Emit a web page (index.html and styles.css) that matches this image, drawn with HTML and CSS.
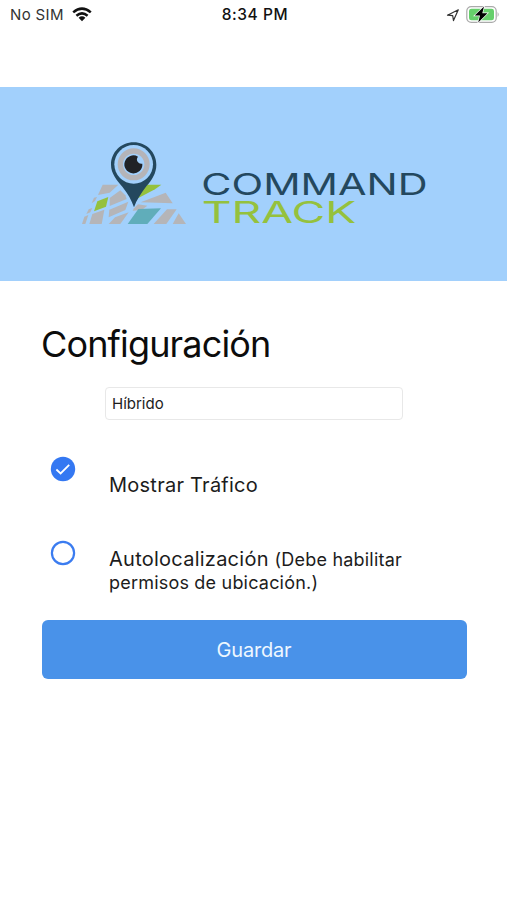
FILE: index.html
```html
<!DOCTYPE html>
<html lang="es">
<head>
<meta charset="utf-8">
<title>Configuración</title>
<link rel="stylesheet" href="styles.css">
</head>
<body>
<div class="status">
  <div class="carrier"><span class="sim">No SIM</span>
    <svg class="wifi" width="20" height="15" viewBox="0 0 20 15" fill="none" stroke="#111" stroke-width="2.5"><path d="M1.2 5.4Q10-2.2 18.8 5.4M4.4 8.8Q10 4 15.6 8.8"/><path d="M6.6 10.7Q10 8 13.4 10.7L10 14.2Z" fill="#111" stroke="none"/></svg>
  </div>
  <time class="clock">8:34 PM</time>
  <div class="power">
    <svg width="14" height="14" viewBox="0 0 14 14" fill="none" stroke="#333" stroke-width="1.2" stroke-linejoin="round"><path d="M1.5 7.2L12.3 1.8L7.5 12.6L6.7 7.6Z"/></svg>
    <svg width="34" height="20" viewBox="0 0 34 20"><rect x=".8" y="1.6" width="29.4" height="15.8" rx="4.4" fill="#fff" stroke="#aaa" stroke-width="1.2"/><rect x="3" y="3.7" width="25" height="11.6" rx="2.4" fill="#66cf6b"/><path d="M31.6 7Q33.8 9.5 31.6 12Z" fill="#aaa"/><path d="M18 1.5L8.7 10.5H14L12.2 17.5L21.5 8.2H16.3Z" fill="#000" stroke="#fff" stroke-width="1.3" paint-order="stroke"/></svg>
  </div>
</div>
<header class="banner">
  <svg class="logo" width="370" height="105" viewBox="0 0 1110 315">
    <g fill="#b5b5b8">
      <path d="M98 164H145L119 188L84 195Z"/>
      <path d="M119 204L151 181L166 196L170 207L119 228Z"/>
      <path d="M118 239L175 215L166 240L116 262Z"/>
      <path d="M72 203L81 201L75 213L65 220Z"/>
      <path d="M56 238L67 234L61 247L49 252Z"/>
      <path d="M43 260L55 255L46 282H36Z"/>
      <path d="M67 252L103 239L95 282H58Z"/>
      <path d="M135 262L176 247L151 282H116Z"/>
      <path d="M212 217L287 188L308 220Z"/>
      <path d="M192 235L204 223L232 227L215 240L188 242Z"/>
      <path d="M291 238H320L289 282H251Z"/>
      <path d="M326 250L348 282H308Z"/>
    </g>
    <path d="M82 214L115 201L108 230L72 244Z" fill="#95c13d"/>
    <path d="M221 164H274L255 178L198 208L207 187Z" fill="#95c13d"/>
    <path d="M205 237L273 235L232 282H173Z" fill="#60adba"/>
    <path d="M191 37C153 37 123 67 123 104C123 130 140 150 157 170C174 191 185 211 192 232C200 210 213 190 229 169C246 149 259 130 259 104C259 67 229 37 191 37Z" fill="#24485e"/>
    <circle cx="191" cy="103" r="58" fill="#a2d0fc"/>
    <circle cx="191" cy="103" r="48" fill="#b5b4b8"/>
    <circle cx="191" cy="103" r="32" fill="#a2d0fc"/>
    <path d="M204 80A27 27 0 1 0 217 101A13 13 0 0 1 204 80Z" fill="#202226"/>
    <text class="word navy" x="394" y="195" textLength="679" lengthAdjust="spacingAndGlyphs">COMMAND</text>
    <text class="word green" x="395" y="279" textLength="464" lengthAdjust="spacingAndGlyphs">TRACK</text>
  </svg>
</header>
<main class="content">
  <h1 class="title">Configuración</h1>
  <div class="select">Híbrido</div>
  <div class="option traffic">
    <svg class="radio" width="26" height="26" viewBox="0 0 26 26"><circle cx="13" cy="13" r="12.2" fill="#3478f2"/><path d="M6.4 13.5L10.6 17.4L19.2 8.8" fill="none" stroke="#fff" stroke-width="1.8"/></svg>
    <div class="label">Mostrar Tráfico</div>
  </div>
  <div class="option locate">
    <svg class="radio" width="26" height="26" viewBox="0 0 26 26"><circle cx="13" cy="13" r="11.1" fill="#fff" stroke="#3b7cf0" stroke-width="2.2"/></svg>
    <div class="label">Autolocalización <span class="note">(Debe habilitar<br>permisos de ubicación.)</span></div>
  </div>
  <button class="save">Guardar</button>
</main>
</body>
</html>
```

FILE: styles.css
```css
* { box-sizing: border-box; }
body { margin: 0; min-height: 900px; background: #fff; color: #1c1c1c; font-family: Inter, "Liberation Sans", sans-serif; }
.status { height: 87px; padding: 4px 7px 0 10px; display: grid; grid-template-columns: 1fr auto 1fr; align-items: start; line-height: 21px; }
.carrier { display: flex; align-items: center; gap: 8px; height: 21px; }
.sim { font-size: 15px; letter-spacing: .35px; color: #333; }
.clock { font-size: 15.5px; font-weight: 500; letter-spacing: .55px; color: #111; }
.power { display: flex; justify-content: flex-end; align-items: center; gap: 6px; height: 21px; }
.banner { height: 194px; padding: 43px 0 0 70px; background: #a2d0fc; }
.logo { display: block; }
.word { font-family: Inter, sans-serif; font-size: 90px; font-weight: 400; }
.navy { fill: #24485e; }
.green { fill: #95c13d; }
.content { padding: 39px 41px 0 42px; }
.title { margin: 0 0 0 -1px; font-size: 36px; line-height: 49px; font-weight: 400; letter-spacing: -.85px; color: #0c0c0c; }
.select { width: 298px; height: 33px; margin: 18px 0 0 63px; padding-left: 6px; border: 1px solid #e8e8e8; border-radius: 4px; font-size: 15px; line-height: 32px; }
.option { display: flex; gap: 33px; padding-left: 8px; }
.radio { flex: none; }
.label { font-size: 20px; line-height: 23px; letter-spacing: .25px; white-space: nowrap; }
.note { font-size: 18px; letter-spacing: .2px; }
.traffic { height: 84px; margin-top: 36px; }
.traffic .label { padding-top: 18px; }
.locate { height: 80px; }
.locate .label { padding-top: 8px; }
.save { display: block; width: 425px; height: 59px; padding: 1px 0 0; margin-left: -.5px; border: 0; border-radius: 6px; background: #4992e9; color: #eef7ff; font: 400 20px Inter, sans-serif; letter-spacing: -.2px; }
```
